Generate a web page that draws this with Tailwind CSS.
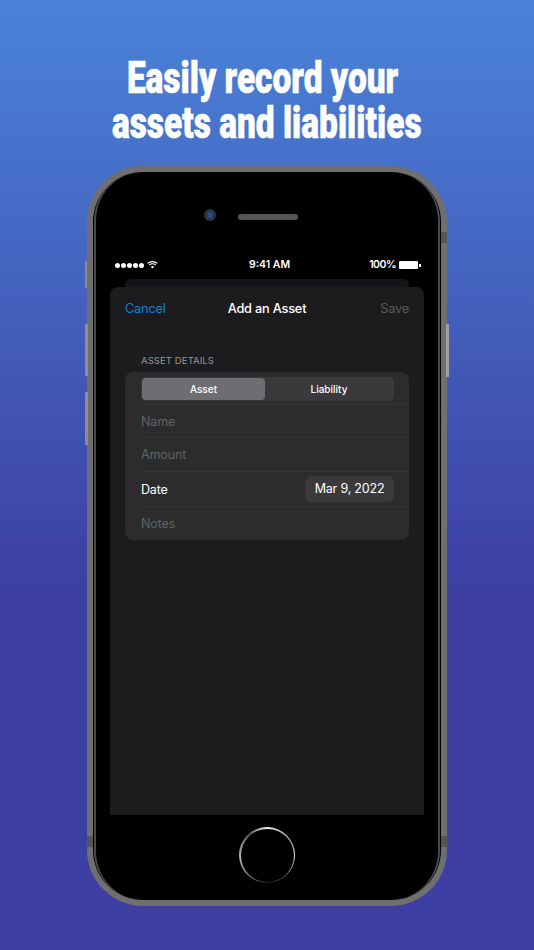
<!DOCTYPE html>
<html lang="en">
<head>
    <meta charset="UTF-8">
    <meta name="viewport" content="width=device-width, initial-scale=1.0">
    <title>Add an Asset</title>
    <script src="https://cdn.jsdelivr.net/npm/@tailwindcss/browser@4"></script>
</head>
<body class="w-[534px] h-[950px] overflow-hidden bg-[linear-gradient(180deg,#4a83d8_0%,#3d3fa3_62%,#3d3fa3_100%)] font-['Inter','Liberation_Sans',sans-serif]">
    <!-- headline -->
    <header class="h-[166px] pt-[56px] flex justify-center text-white font-['Roboto',sans-serif] font-black text-[44px] leading-[45px] [-webkit-text-stroke:0.6px_white]">
        <h1 class="whitespace-nowrap text-center scale-x-[0.76]">Easily record your&nbsp;<br>assets and liabilities</h1>
    </header>

    <!-- phone -->
    <div class="relative ml-[87px] w-[360px] h-[740px] rounded-[56px] bg-[#6f6f71] p-[6px]">
        <div class="absolute left-[-2px] top-[95px] w-[2px] h-[27px] bg-[#8a8a8c]"></div>
        <div class="absolute left-[-2px] top-[158px] w-[3px] h-[52px] bg-[#8f8f91]"></div>
        <div class="absolute left-[-2px] top-[226px] w-[3px] h-[53px] bg-[#8f8f91]"></div>
        <div class="absolute right-[-2px] top-[158px] w-[3px] h-[53px] bg-[#a0a0a2]"></div>
        <div class="absolute right-0 top-[66px] w-[6px] h-[11px] bg-[#555557]"></div>
        <div class="absolute right-0 top-[670px] w-[6px] h-[11px] bg-[#555557]"></div>
        <div class="absolute left-0 top-[670px] w-[6px] h-[11px] bg-[#555557]"></div>

        <div class="h-full rounded-[50px] bg-black px-[1px]">
            <div class="h-full rounded-[49px] border-x-[2px] border-[#4a4a4c] flex flex-col items-center">
                <!-- camera and speaker -->
                <div class="h-[50px] w-full shrink-0 flex items-end pl-[108px] gap-[22px]">
                    <div class="w-[12px] h-[12px] mb-[1px] rounded-full bg-[#2c3440] flex items-center justify-center">
                        <div class="w-[6px] h-[6px] rounded-full bg-[#1d4f96]"></div>
                    </div>
                    <div class="w-[60px] h-[6px] mb-[2px] rounded-full bg-[#555557]"></div>
                </div>

                <!-- status bar -->
                <div class="relative mt-[35px] w-[314px] h-[16px] shrink-0 text-white text-[10.5px] font-semibold flex items-center justify-between pl-[5px] pr-[3px]">
                    <div class="flex items-center gap-[3px]">
                        <div class="flex gap-[1px]">
                            <span class="w-[5px] h-[5px] rounded-full bg-white"></span>
                            <span class="w-[5px] h-[5px] rounded-full bg-white"></span>
                            <span class="w-[5px] h-[5px] rounded-full bg-white"></span>
                            <span class="w-[5px] h-[5px] rounded-full bg-white"></span>
                            <span class="w-[5px] h-[5px] rounded-full bg-white"></span>
                        </div>
                        <svg width="11" height="8" viewBox="0 0 11 8" fill="none" stroke="white" stroke-width="1.1">
                            <path d="M0.6 2.4C3.4 0 7.6 0 10.4 2.4"/>
                            <path d="M2.2 4C4 2.5 7 2.5 8.8 4"/>
                            <path d="M5.5 7.6L3.7 5.6C4.7 4.8 6.3 4.8 7.3 5.6Z" fill="white" stroke="none"/>
                        </svg>
                    </div>
                    <span class="absolute left-[139px]">9:41 AM</span>
                    <div class="flex items-center">
                        <span class="tracking-[-0.5px] mr-[3px]">100%</span>
                        <div class="w-[19px] h-[8px] bg-white rounded-[1px]"></div>
                        <div class="w-[2px] h-[3px] bg-white ml-[1px]"></div>
                    </div>
                </div>

                <!-- card behind the sheet -->
                <div class="mt-[6px] w-[284px] h-[8px] shrink-0 rounded-t-[6px] bg-[#151517]"></div>

                <!-- sheet -->
                <div class="w-[314px] h-[528px] shrink-0 rounded-t-[8px] bg-[#1c1c1e]">
                    <div class="h-[42px] pt-[2px] px-[15px] flex items-center justify-between text-[12.75px] tracking-[-0.2px] relative">
                        <span class="text-[#0f80de]">Cancel</span>
                        <span class="absolute inset-x-0 text-center text-white font-medium">Add an Asset</span>
                        <span class="text-[#5a5a5c]">Save</span>
                    </div>
                    <div class="pl-[31px] pt-[26px] h-[43px] text-[9.5px] leading-[12px] text-[#98989d] tracking-[0.1px]">ASSET DETAILS</div>
                    <div class="mx-[15px] h-[168px] rounded-[8px] bg-[#2c2c2e] pl-[16px]">
                        <div class="h-[33px] pt-[5px] pr-[15px] border-b border-[#343436]">
                            <div class="h-[24px] rounded-[5px] bg-[#3a3a3c] p-[1px] flex text-[10px] font-medium text-white">
                                <div class="w-[123px] h-[22px] rounded-[4px] bg-[#6e6e72] flex items-center justify-center">Asset</div>
                                <div class="flex-1 flex items-center justify-center">Liability</div>
                            </div>
                        </div>
                        <div class="h-[33px] pt-[2px] flex items-center border-b border-[#343436] text-[12.5px] tracking-[-0.1px] text-[#636366]">Name</div>
                        <div class="h-[34px] pt-[2px] flex items-center border-b border-[#343436] text-[12.5px] tracking-[-0.1px] text-[#636366]">Amount</div>
                        <div class="h-[35px] flex items-center justify-between pr-[15px] border-b border-[#343436] text-[12.5px] tracking-[-0.2px] text-white">
                            <span class="pt-[2px]">Date</span>
                            <span class="w-[89px] h-[26px] pt-[1px] rounded-[6px] bg-[#3a3a3c] flex items-center justify-center">Mar 9, 2022</span>
                        </div>
                        <div class="h-[33px] pt-[2px] flex items-center text-[12.5px] tracking-[-0.1px] text-[#636366]">Notes</div>
                    </div>
                </div>

                <!-- home button -->
                <div class="mt-[12px] w-[56px] h-[56px] shrink-0 rounded-full p-[1.5px] bg-[conic-gradient(#f0f0f0_0deg,#999_50deg,#eee_95deg,#777_130deg,#222_175deg,#777_225deg,#bbb_265deg,#555_320deg,#f0f0f0_360deg)]">
                    <div class="w-full h-full rounded-full bg-black"></div>
                </div>
            </div>
        </div>
    </div>
</body>
</html>
